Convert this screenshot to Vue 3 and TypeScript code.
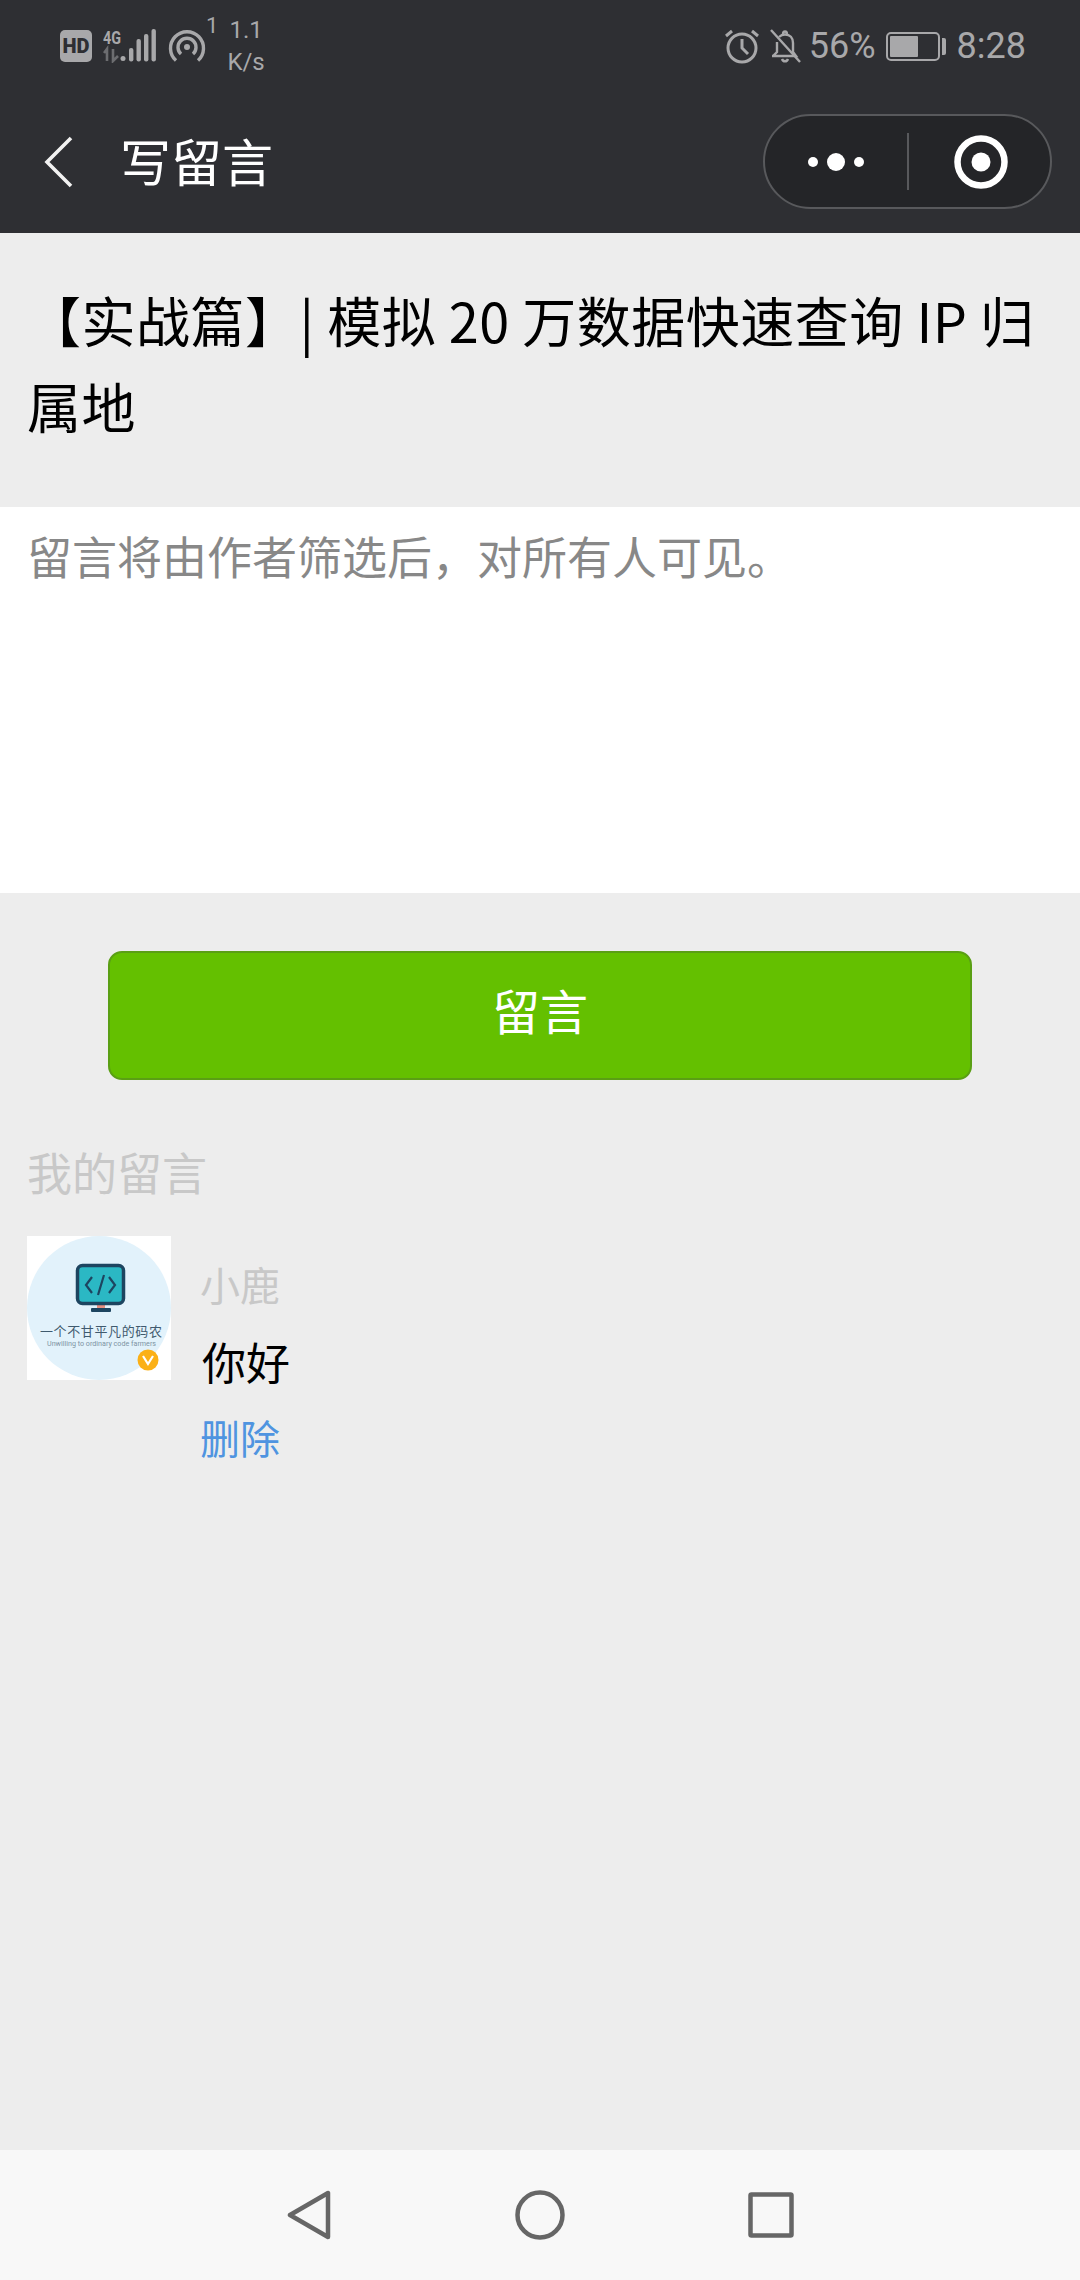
<template>
  <div class="page">
    <header class="top">
      <div class="status">
        <div class="status-left">
          <svg class="hd" width="32" height="32" viewBox="0 0 32 32">
            <rect width="32" height="32" rx="5" fill="#a8a8aa" />
            <text x="16" y="23" text-anchor="middle" class="hd-text">HD</text>
          </svg>
          <svg class="signal" width="54" height="38" viewBox="0 -4 54 38">
            <text x="0" y="15" class="net-text" textLength="18" lengthAdjust="spacingAndGlyphs">4G</text>
            <path d="M4 32V20L1 24M10 20V32L15 27" fill="none" stroke="#6c6d70" stroke-width="2.6" />
            <circle cx="20" cy="29.500" r="2.500" fill="#a8a8aa" />
            <rect x="26" y="19" width="4.400" height="13.500" rx="2" fill="#a8a8aa" />
            <rect x="33.500" y="10" width="4.400" height="22.500" rx="2" fill="#a8a8aa" />
            <rect x="41" y="5" width="4.400" height="27.500" rx="2" fill="#a8a8aa" />
            <rect x="48.500" y="0" width="4.400" height="32.500" rx="2" fill="#a8a8aa" />
          </svg>
          <svg class="hotspot" width="38" height="34" viewBox="0 0 38 34" fill="none" stroke="#a8a8aa" stroke-width="3.400">
            <path d="M8 31.500A16.500 16.500 0 1 1 30 31.500" />
            <path d="M13 25A9 9 0 1 1 25 25" />
            <circle cx="19" cy="18" r="3" fill="#a8a8aa" stroke="none" />
          </svg>
          <span class="hot-count">1</span>
          <div class="speed">
            <span>1.1</span>
            <span>K/s</span>
          </div>
        </div>
        <div class="status-right">
          <svg width="36" height="36" viewBox="0 0 36 36" fill="none" stroke="#a8a8aa" stroke-width="3">
            <circle cx="18" cy="20" r="14" />
            <path d="M18 11V20L24 26" />
            <path d="M2 8L8 3M34 8L28 3" />
          </svg>
          <svg class="bell" width="32" height="34" viewBox="0 0 32 34" fill="none" stroke="#a8a8aa" stroke-width="2.400">
            <path d="M2 27H26L23 23V14C23 9 20 5.500 15 5.500C12.500 5.500 10.500 6.500 9 8M7 13V23L3 27" />
            <path d="M13 5.500C13 1.500 17 1.500 17 5.500M12 30C13 33 17 33 18 30" />
            <path d="M1 1L30 33" />
          </svg>
          <span class="pct">56%</span>
          <div class="battery">
            <div class="battery-body"><div class="battery-fill"></div></div>
            <div class="battery-cap"></div>
          </div>
          <span class="clock">8:28</span>
        </div>
      </div>
      <div class="nav">
        <svg class="back" width="30" height="52" viewBox="0 0 30 52" fill="none" stroke="#f2f2f2" stroke-width="3.600">
          <path d="M27 2L3 26L27 50" />
        </svg>
        <span class="nav-title">写留言</span>
        <div class="capsule">
          <div class="capsule-btn capsule-btn-left">
            <svg width="56" height="20" viewBox="0 0 56 20" fill="#fff">
              <circle cx="5" cy="10" r="5" />
              <circle cx="28" cy="10" r="9" />
              <circle cx="51" cy="10" r="5" />
            </svg>
          </div>
          <div class="capsule-line"></div>
          <div class="capsule-btn capsule-btn-right">
            <svg width="54" height="54" viewBox="0 0 54 54">
              <circle cx="27" cy="27" r="23.500" fill="none" stroke="#fff" stroke-width="6.500" />
              <circle cx="27" cy="27" r="9.500" fill="#fff" />
            </svg>
          </div>
        </div>
      </div>
    </header>

    <main class="main">
      <h1 class="article">{{ articleTitle }}</h1>
      <div class="editor">留言将由作者筛选后，对所有人可见。</div>
      <button class="submit">留言</button>
      <div class="section">我的留言</div>
      <div class="comment">
        <svg class="avatar" width="144" height="144" viewBox="0 0 144 144">
          <rect width="144" height="144" fill="#fff" />
          <circle cx="72" cy="72" r="72" fill="#e2f2fb" />
          <rect x="70" y="67" width="8" height="6" fill="#e88f80" />
          <rect x="64" y="72" width="20" height="4" rx="1" fill="#1d4560" />
          <rect x="50.500" y="29.500" width="46" height="38" rx="5" fill="#2bb8c4" stroke="#1d4560" stroke-width="3.500" />
          <path d="M65 41L59 49L65 57M82 41L88 49L82 57M77 39L71 59" fill="none" stroke="#1d4560" stroke-width="2.200" />
          <text x="13" y="100" class="logo-cn" textLength="122">一个不甘平凡的码农</text>
          <text x="20" y="110" class="logo-en" textLength="109" lengthAdjust="spacingAndGlyphs">Unwilling to ordinary code farmers</text>
          <circle cx="121" cy="124" r="10.500" fill="#fbb016" />
          <path d="M116 120L121 128L126 120" fill="none" stroke="#fff" stroke-width="2.200" />
        </svg>
        <div class="comment-body">
          <div class="comment-name">小鹿</div>
          <div class="comment-text">你好</div>
          <div class="comment-del">删除</div>
        </div>
      </div>
    </main>

    <footer class="navbar">
      <div class="nav-key">
        <svg width="44" height="50" viewBox="0 0 44 50" fill="none" stroke="#666" stroke-width="4.500" stroke-linejoin="round">
          <path d="M41 3V47L3 25Z" />
        </svg>
      </div>
      <div class="nav-key">
        <svg width="50" height="50" viewBox="0 0 50 50" fill="none" stroke="#666" stroke-width="4.500">
          <circle cx="25" cy="25" r="22.500" />
        </svg>
      </div>
      <div class="nav-key">
        <svg width="46" height="46" viewBox="0 0 46 46" fill="none" stroke="#666" stroke-width="4.500" stroke-linejoin="round">
          <rect x="2.500" y="2.500" width="41" height="41" rx="1" />
        </svg>
      </div>
    </footer>
  </div>
</template>

<script setup lang="ts">
const articleTitle = '【实战篇】| 模拟 20 万数据快速查询 IP 归属地'
</script>

<style>
html,
body {
  margin: 0;
  background: #ededed;
}
</style>

<style scoped>
.page {
  width: 1080px;
  height: 2280px;
  display: flex;
  flex-direction: column;
  overflow: hidden;
  background: #ededed;
  font-family: "Noto Sans CJK SC", "Noto Sans", sans-serif;
}

.top {
  height: 233px;
  background: #2e2f33;
  flex-shrink: 0;
}

.status {
  height: 90px;
  box-sizing: border-box;
  padding: 2px 54px 0 60px;
  display: flex;
  justify-content: space-between;
  align-items: center;
  color: #a8a8aa;
  font-family: Roboto, sans-serif;
}

.status-left,
.status-right {
  display: flex;
  align-items: center;
}

.hd-text {
  font: 900 20px Roboto, sans-serif;
  fill: #2e2f33;
}

.signal {
  margin: -4px 0 0 11px;
}

.net-text {
  font: 700 19px Roboto, sans-serif;
  fill: #a8a8aa;
}

.hotspot {
  margin-left: 11px;
}

.hot-count {
  font-size: 22px;
  align-self: flex-start;
  line-height: 24px;
}

.speed {
  display: flex;
  flex-direction: column;
  align-items: center;
  margin-left: 9px;
  font-size: 24px;
  line-height: 32px;
}

.status-right {
  font-size: 36px;
  line-height: 40px;
}

.bell {
  margin-left: 10px;
}

.pct {
  margin-left: 7px;
}

.battery {
  display: flex;
  align-items: center;
  margin-left: 10px;
  gap: 2px;
}

.battery-body {
  width: 54px;
  height: 29px;
  box-sizing: border-box;
  border: 2px solid #a8a8aa;
  border-radius: 5px;
  padding: 2px;
}

.battery-fill {
  width: 28px;
  height: 100%;
  background: #a8a8aa;
  border-radius: 1px;
}

.battery-cap {
  width: 4px;
  height: 17px;
  background: #a8a8aa;
  border-radius: 0 2px 2px 0;
}

.clock {
  margin-left: 11px;
}

.nav {
  height: 143px;
  display: flex;
  align-items: center;
  padding: 0 28px 0 44px;
}

.nav-title {
  margin-left: 46px;
  padding-bottom: 4px;
  color: #fff;
  font-size: 51px;
  line-height: 60px;
}

.capsule {
  margin-left: auto;
  width: 289px;
  height: 95px;
  box-sizing: border-box;
  display: flex;
  align-items: center;
  background: #242528;
  border: 2px solid #58595c;
  border-radius: 48px;
}

.capsule-btn {
  display: flex;
  justify-content: center;
  align-items: center;
}

.capsule-btn-left {
  flex: 0 0 142px;
}

.capsule-btn-right {
  flex: 1;
  padding-left: 2px;
}

.capsule-line {
  width: 2px;
  height: 57px;
  background: #58595c;
}

.main {
  flex: 1;
  display: flex;
  flex-direction: column;
}

.article {
  margin: 0;
  padding: 44px 27px 58px;
  font-size: 54px;
  line-height: 86px;
  letter-spacing: 0.5px;
  font-weight: 400;
  color: #000;
}

.editor {
  height: 386px;
  box-sizing: border-box;
  padding: 19px 27px;
  background: #fff;
  color: #888;
  font-size: 45px;
  line-height: 60px;
}

.submit {
  align-self: center;
  margin-top: 58px;
  width: 864px;
  height: 129px;
  box-sizing: border-box;
  padding: 0 0 13px;
  background: #64c000;
  border: 2px solid #5a9f14;
  border-radius: 14px;
  color: #fff;
  font-family: inherit;
  font-size: 48px;
}

.section {
  margin: 62px 0 0 27px;
  color: #c8c8c8;
  font-size: 45px;
  line-height: 60px;
}

.comment {
  display: flex;
  margin: 34px 0 0 27px;
}

.avatar {
  flex-shrink: 0;
}

.logo-cn {
  font-size: 13px;
  fill: #3f5a6e;
}

.logo-en {
  font: 7px Roboto, sans-serif;
  fill: #7d93a3;
}

.comment-body {
  margin-left: 29px;
  padding-top: 18px;
  display: flex;
  flex-direction: column;
  gap: 15px;
  line-height: 60px;
}

.comment-name {
  color: #c8c8c8;
  font-size: 40px;
}

.comment-text {
  color: #000;
  font-size: 44px;
  margin: 2px 0 0 2px;
}

.comment-del {
  color: #4f94e0;
  font-size: 40px;
  margin-top: 1px;
}

.navbar {
  height: 130px;
  flex-shrink: 0;
  background: #f8f8f8;
  display: flex;
  justify-content: center;
  align-items: center;
}

.nav-key {
  width: 231px;
  display: flex;
  justify-content: center;
}
</style>
